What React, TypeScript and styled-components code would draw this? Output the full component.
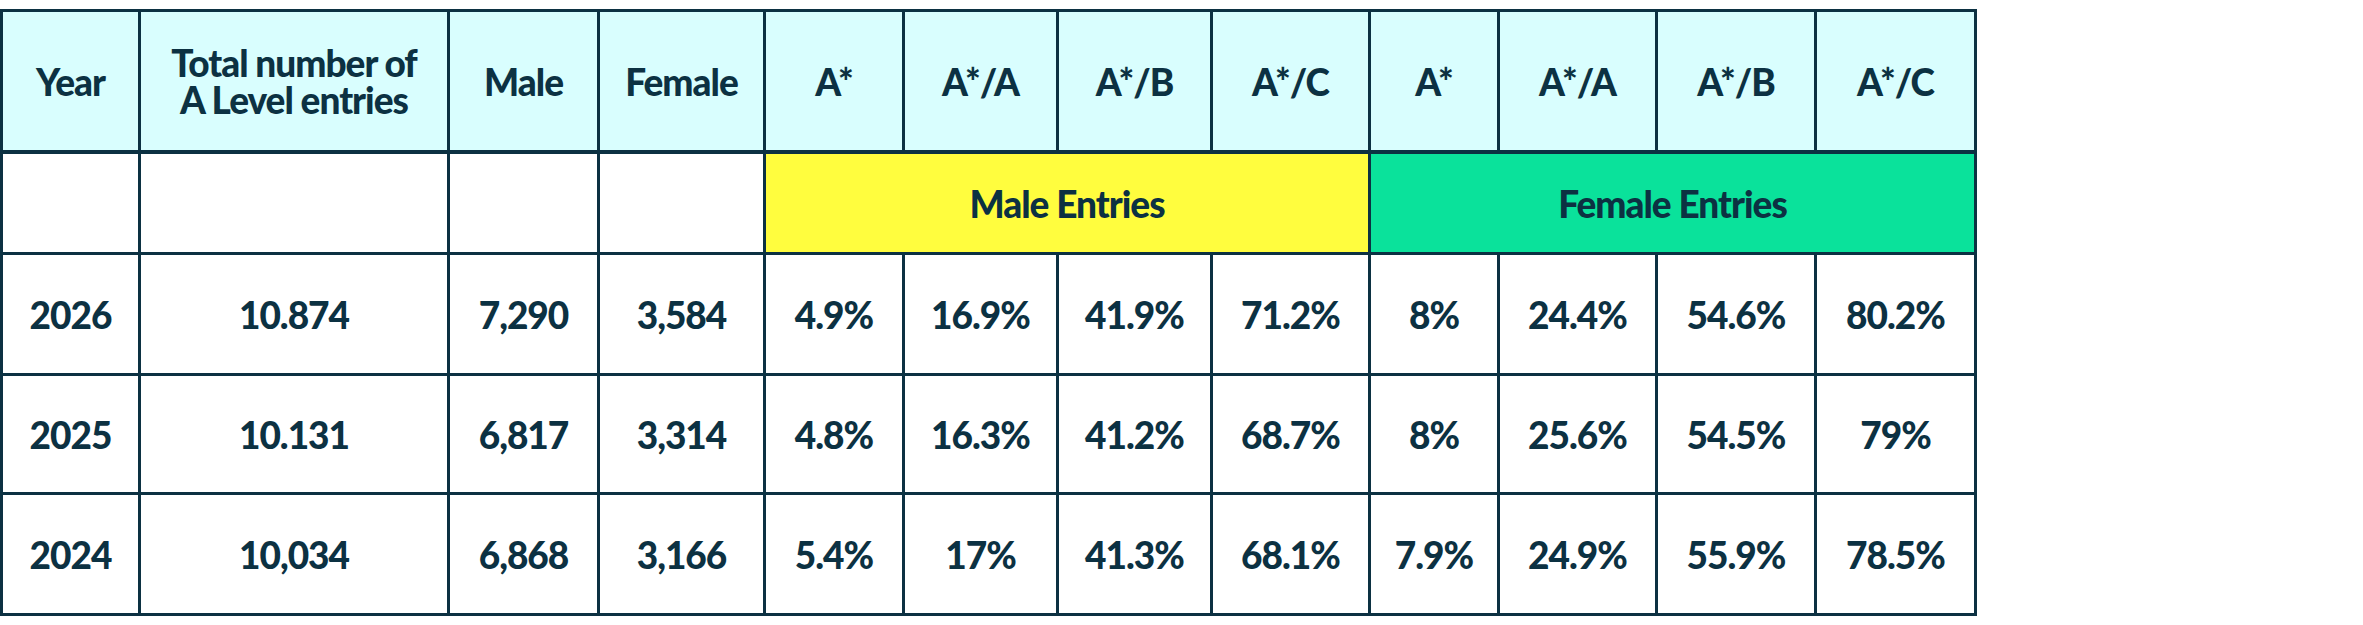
import styled, { createGlobalStyle } from "styled-components";

const GlobalStyle = createGlobalStyle`
  html, body {
    margin: 0;
    padding: 0;
    background: #ffffff;
  }
  body {
    font-family: Lato, "Noto Sans", sans-serif;
    color: #0c3142;
  }
`;

const Page = styled.div`
  padding-top: 9px;
`;

const Table = styled.table`
  width: 1974px;
  border-collapse: collapse;
  table-layout: fixed;
  font-family: Lato, "Noto Sans", sans-serif;
  font-weight: 900;
  font-size: 37px;
  letter-spacing: -1px;
  color: #0c3142;
`;

const Cell = styled.td<{ $bg?: string; $h: number }>`
  height: ${(p) => p.$h}px;
  padding: 0;
  border: 3px solid #0c3142;
  background: ${(p) => p.$bg || "#ffffff"};
  text-align: center;
  vertical-align: middle;
  line-height: 37px;
`;

const HeadCell = styled(Cell).attrs({ as: "th" })`
  font-weight: 900;
  border-bottom-width: 4px;
`;

const HeadLine = styled.div`
  line-height: 37px;
`;

const widths = [138, 309, 150, 166, 139, 154, 154, 158, 129, 158, 159, 160];

const headers = [
  "Year",
  "Total number of|A Level entries",
  "Male",
  "Female",
  "A*",
  "A*/A",
  "A*/B",
  "A*/C",
  "A*",
  "A*/A",
  "A*/B",
  "A*/C",
];

const rows = [
  ["2026", "10.874", "7,290", "3,584", "4.9%", "16.9%", "41.9%", "71.2%", "8%", "24.4%", "54.6%", "80.2%"],
  ["2025", "10.131", "6,817", "3,314", "4.8%", "16.3%", "41.2%", "68.7%", "8%", "25.6%", "54.5%", "79%"],
  ["2024", "10,034", "6,868", "3,166", "5.4%", "17%", "41.3%", "68.1%", "7.9%", "24.9%", "55.9%", "78.5%"],
];

const rowHeights = [118, 116, 118];

export default function App() {
  return (
    <Page>
      <GlobalStyle />
      <Table>
        <colgroup>
          {widths.map((w, i) => (
            <col key={i} style={{ width: w }} />
          ))}
        </colgroup>
        <thead>
          <tr>
            {headers.map((h, i) => (
              <HeadCell key={i} $h={138} $bg="#d9fefe">
                {h.split("|").map((line, j) => (
                  <HeadLine key={j}>{line}</HeadLine>
                ))}
              </HeadCell>
            ))}
          </tr>
        </thead>
        <tbody>
          <tr>
            <Cell $h={98} />
            <Cell $h={98} />
            <Cell $h={98} />
            <Cell $h={98} />
            <Cell $h={98} colSpan={4} $bg="#fffd3e">
              Male Entries
            </Cell>
            <Cell $h={98} colSpan={4} $bg="#0ae29b">
              Female Entries
            </Cell>
          </tr>
          {rows.map((r, i) => (
            <tr key={i}>
              {r.map((v, j) => (
                <Cell key={j} $h={rowHeights[i]}>
                  {v}
                </Cell>
              ))}
            </tr>
          ))}
        </tbody>
      </Table>
    </Page>
  );
}
